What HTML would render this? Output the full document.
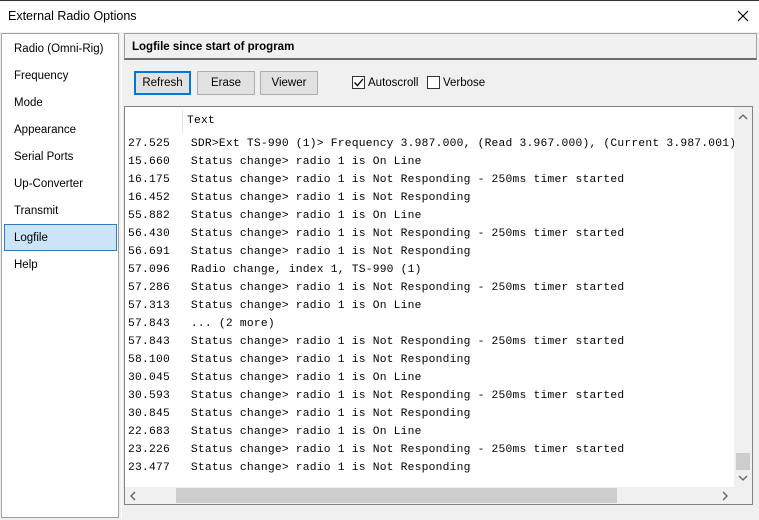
<!DOCTYPE html>
<html><head><style>
*{margin:0;padding:0;box-sizing:border-box}
body{width:759px;height:520px;background:#f0f0f0;font-family:"Liberation Sans",sans-serif;font-size:11.5px;color:#000;position:relative;overflow:hidden}
.abs{position:absolute}
.title{left:0;top:0;width:759px;height:32px;background:#fff;border-top:1px solid #333}
.title span{position:absolute;left:8px;top:8px;font-size:12.5px}
.left{left:1px;top:33px;width:118px;height:485px;background:#fff;border:1px solid #a0a0a0}
.item{position:absolute;left:12px;font-size:11.5px;margin-top:1px}
.sel{position:absolute;left:2px;top:190px;width:113px;height:27px;background:#cce4f7;border:1px solid #2b7bc0}
.hdr{left:124px;top:33px;width:633px;height:27px;background:#f0f0f0;border:1px solid #a0a0a0;border-bottom:2px solid #6d6d6d}
.hdr span{position:absolute;left:7px;top:7px;font-weight:bold;font-size:11.5px}
.btn{position:absolute;top:71px;height:24px;background:#e1e1e1;border:1px solid #adadad;text-align:center;line-height:22px;font-size:11.5px}
.cb{position:absolute;top:76px;width:13px;height:13px;border:1px solid #333;background:#fff}
.log{left:124px;top:106px;width:629px;height:399px;background:#fff;border:1px solid #828282;overflow:hidden}
.mono{font-family:"Liberation Mono",monospace;font-size:11px;letter-spacing:0.2px;white-space:pre;position:absolute;transform:scaleX(1.028);transform-origin:0 0}
</style></head><body>
<div class="abs title"><span>External Radio Options</span>
<svg class="abs" style="left:737px;top:9px" width="12" height="12"><path d="M1 1L11 11M11 1L1 11" stroke="#000" stroke-width="1.2"/></svg></div>
<div class="abs left">
<div class="sel"></div>
<div class="item" style="top:8px">Radio (Omni-Rig)</div>
<div class="item" style="top:35px">Frequency</div>
<div class="item" style="top:62px">Mode</div>
<div class="item" style="top:89px">Appearance</div>
<div class="item" style="top:116px">Serial Ports</div>
<div class="item" style="top:143px">Up-Converter</div>
<div class="item" style="top:170px">Transmit</div>
<div class="item" style="top:197px">Logfile</div>
<div class="item" style="top:224px">Help</div>
</div>
<div class="abs" style="left:121px;top:33px;width:1px;height:485px;background:#fff"></div>
<div class="abs hdr"><span>Logfile since start of program</span></div>
<div class="btn" style="left:134px;width:57px;border:2px solid #0078d7;line-height:21px">Refresh</div>
<div class="btn" style="left:197px;width:58px;line-height:23px">Erase</div>
<div class="btn" style="left:260px;width:58px;line-height:23px">Viewer</div>
<div class="cb" style="left:352px"><svg width="11" height="11" style="position:absolute;left:0;top:0"><path d="M1.5 5.5L4.5 8.5L10 2" stroke="#000" stroke-width="1.3" fill="none"/></svg></div>
<div class="abs" style="left:368px;top:77px">Autoscroll</div>
<div class="cb" style="left:427px"></div>
<div class="abs" style="left:443px;top:77px">Verbose</div>
<div class="abs log">
<div class="abs" style="left:57px;top:2px;width:1px;height:24px;background:#e5e5e5"></div>
<div class="mono" style="left:62px;top:8px">Text</div>
<div class="mono" style="left:3px;top:28px;line-height:18px">27.525   SDR&gt;Ext TS-990 (1)&gt; Frequency 3.987.000, (Read 3.967.000), (Current 3.987.001)
15.660   Status change&gt; radio 1 is On Line
16.175   Status change&gt; radio 1 is Not Responding - 250ms timer started
16.452   Status change&gt; radio 1 is Not Responding
55.882   Status change&gt; radio 1 is On Line
56.430   Status change&gt; radio 1 is Not Responding - 250ms timer started
56.691   Status change&gt; radio 1 is Not Responding
57.096   Radio change, index 1, TS-990 (1)
57.286   Status change&gt; radio 1 is Not Responding - 250ms timer started
57.313   Status change&gt; radio 1 is On Line
57.843   ... (2 more)
57.843   Status change&gt; radio 1 is Not Responding - 250ms timer started
58.100   Status change&gt; radio 1 is Not Responding
30.045   Status change&gt; radio 1 is On Line
30.593   Status change&gt; radio 1 is Not Responding - 250ms timer started
30.845   Status change&gt; radio 1 is Not Responding
22.683   Status change&gt; radio 1 is On Line
23.226   Status change&gt; radio 1 is Not Responding - 250ms timer started
23.477   Status change&gt; radio 1 is Not Responding</div>
<div class="abs" style="left:609px;top:0;width:18px;height:380px;background:#f0f0f0"></div>
<div class="abs" style="left:611px;top:346px;width:14px;height:17px;background:#cdcdcd"></div>
<svg class="abs" style="left:613px;top:6px" width="10" height="8"><path d="M1 6L5 2L9 6" stroke="#606060" stroke-width="1.3" fill="none"/></svg>
<svg class="abs" style="left:613px;top:367px" width="10" height="8"><path d="M1 2L5 6L9 2" stroke="#606060" stroke-width="1.3" fill="none"/></svg>
<div class="abs" style="left:0;top:380px;width:627px;height:17px;background:#f0f0f0"></div>
<div class="abs" style="left:51px;top:381px;width:441px;height:15px;background:#cdcdcd"></div>
<svg class="abs" style="left:4px;top:384px" width="8" height="10"><path d="M6 1L2 5L6 9" stroke="#606060" stroke-width="1.3" fill="none"/></svg>
<svg class="abs" style="left:596px;top:384px" width="8" height="10"><path d="M2 1L6 5L2 9" stroke="#606060" stroke-width="1.3" fill="none"/></svg>
</div>
</body></html>
